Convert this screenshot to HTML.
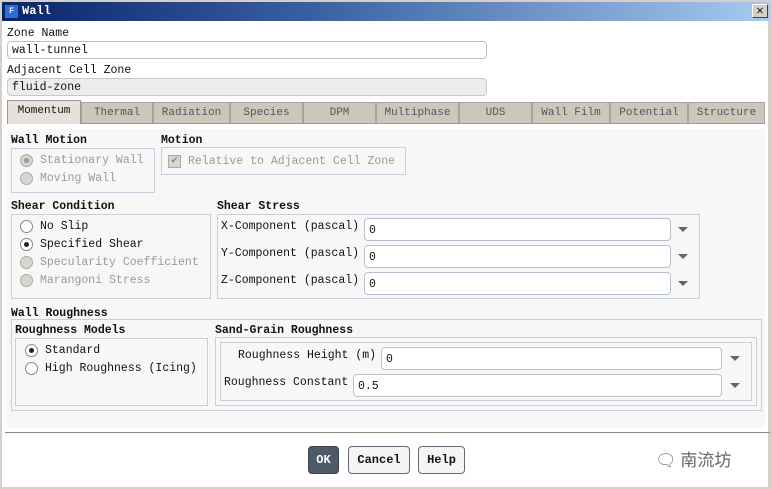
<!DOCTYPE html>
<html><head><style>
*{box-sizing:border-box;margin:0;padding:0}
body{width:772px;height:489px;background:#d4d0c8;font-family:"Liberation Mono","Noto Sans CJK SC",monospace;font-size:11.5px;color:#111;position:relative;overflow:hidden}
.a{position:absolute;white-space:nowrap}
.in{position:absolute;background:#fff;border:1px solid #b9c1cf;border-radius:4px;padding:2px 4px;line-height:14px}
.bx{position:absolute;border:1px solid #c7cfdc}
.b{font-weight:bold}
.tab{position:absolute;top:102px;height:21px;background:#cbc7bd;border:1px solid #a8a49a;border-bottom:none;text-align:center;line-height:20px;color:#555;font-size:11px}
.r{position:absolute;width:13px;height:13px;border-radius:50%;border:1px solid #888;background:#fff}
.r.d{background:#d8d5cf;border-color:#aaa}
.r.s::after{content:"";position:absolute;left:3px;top:3px;width:5px;height:5px;border-radius:50%;background:#222}
.r.d.s::after{background:#999}
.g{color:#999}
.arr{position:absolute;width:0;height:0;border-left:5px solid transparent;border-right:5px solid transparent;border-top:5px solid #666}
.btn{position:absolute;top:446px;height:28px;border:1px solid #667;border-radius:4px;background:#f5f5f5;font-weight:bold;text-align:center;line-height:26px;font-size:12px}
</style></head><body>
<div class="a" style="left:2px;top:2px;width:768px;height:19px;background:linear-gradient(90deg,#0a246a,#3a5fa0 40%,#a6caf0)"></div>
<div class="a" style="left:5px;top:5px;width:13px;height:13px;background:#2b6cd8;color:#fff;font-size:8px;text-align:center;line-height:13px;font-weight:bold">F</div>
<div class="a b" style="left:22px;top:4px;color:#fff;font-size:12px">Wall</div>
<div class="a" style="left:752px;top:4px;width:16px;height:14px;background:#d4d0c8;border:1px solid;border-color:#fff #404040 #404040 #fff;text-align:center;line-height:12px;font-weight:bold;font-size:12px">✕</div>
<div class="a" style="left:2px;top:21px;width:766px;height:466px;background:#fff"></div>
<div class="a" style="left:7px;top:27px">Zone Name</div>
<div class="in" style="left:7px;top:41px;width:480px;height:18px">wall-tunnel</div>
<div class="a" style="left:7px;top:64px">Adjacent Cell Zone</div>
<div class="in" style="left:7px;top:78px;width:480px;height:18px;background:#ececec;border-color:#c8c8c8">fluid-zone</div>
<div class="a" style="left:7px;top:101px;width:758px;height:23px;border-bottom:1px solid #999"></div>
<div class="tab" style="left:7px;width:74px;top:100px;height:24px;background:#e6e2da;color:#111;border-color:#999">Momentum</div>
<div class="tab" style="left:81px;width:72px">Thermal</div>
<div class="tab" style="left:153px;width:77px">Radiation</div>
<div class="tab" style="left:230px;width:73px">Species</div>
<div class="tab" style="left:303px;width:73px">DPM</div>
<div class="tab" style="left:376px;width:83px">Multiphase</div>
<div class="tab" style="left:459px;width:73px">UDS</div>
<div class="tab" style="left:532px;width:78px">Wall Film</div>
<div class="tab" style="left:610px;width:78px">Potential</div>
<div class="tab" style="left:688px;width:77px">Structure</div>
<div class="a" style="left:7px;top:129px;width:758px;height:299px;background:#f7f7f7"></div>

<div class="a b" style="left:11px;top:134px">Wall Motion</div>
<div class="bx" style="left:11px;top:148px;width:144px;height:45px"></div>
<div class="r d s" style="left:20px;top:154px"></div><div class="a g" style="left:40px;top:154px">Stationary Wall</div>
<div class="r d" style="left:20px;top:172px"></div><div class="a g" style="left:40px;top:172px">Moving Wall</div>
<div class="a b" style="left:161px;top:134px">Motion</div>
<div class="bx" style="left:161px;top:147px;width:245px;height:28px"></div>
<div class="a" style="left:168px;top:155px;width:13px;height:13px;background:#d8d5cf;border:1px solid #aaa;color:#888;font-size:11px;line-height:11px;text-align:center">✔</div>
<div class="a g" style="left:188px;top:155px">Relative to Adjacent Cell Zone</div>

<div class="a b" style="left:11px;top:200px">Shear Condition</div>
<div class="bx" style="left:11px;top:214px;width:200px;height:85px"></div>
<div class="r" style="left:20px;top:220px"></div><div class="a" style="left:40px;top:220px">No Slip</div>
<div class="r s" style="left:20px;top:238px"></div><div class="a" style="left:40px;top:238px">Specified Shear</div>
<div class="r d" style="left:20px;top:256px"></div><div class="a g" style="left:40px;top:256px">Specularity Coefficient</div>
<div class="r d" style="left:20px;top:274px"></div><div class="a g" style="left:40px;top:274px">Marangoni Stress</div>
<div class="a b" style="left:217px;top:200px">Shear Stress</div>
<div class="bx" style="left:217px;top:214px;width:483px;height:85px"></div>
<div class="a" style="left:221px;top:220px">X-Component (pascal)</div>
<div class="in" style="left:364px;top:218px;width:307px;height:23px;padding-top:5px">0</div>
<div class="arr" style="left:678px;top:227px"></div>
<div class="a" style="left:221px;top:247px">Y-Component (pascal)</div>
<div class="in" style="left:364px;top:245px;width:307px;height:23px;padding-top:5px">0</div>
<div class="arr" style="left:678px;top:254px"></div>
<div class="a" style="left:221px;top:274px">Z-Component (pascal)</div>
<div class="in" style="left:364px;top:272px;width:307px;height:23px;padding-top:5px">0</div>
<div class="arr" style="left:678px;top:281px"></div>

<div class="a b" style="left:11px;top:307px">Wall Roughness</div>
<div class="bx" style="left:11px;top:319px;width:751px;height:92px"></div>
<div class="a b" style="left:15px;top:324px">Roughness Models</div>
<div class="bx" style="left:15px;top:338px;width:193px;height:68px"></div>
<div class="r s" style="left:25px;top:344px"></div><div class="a" style="left:45px;top:344px">Standard</div>
<div class="r" style="left:25px;top:362px"></div><div class="a" style="left:45px;top:362px">High Roughness (Icing)</div>
<div class="a b" style="left:215px;top:324px">Sand-Grain Roughness</div>
<div class="bx" style="left:215px;top:337px;width:542px;height:69px"></div>
<div class="bx" style="left:220px;top:342px;width:532px;height:59px"></div>
<div class="a" style="left:238px;top:349px">Roughness Height (m)</div>
<div class="in" style="left:381px;top:347px;width:341px;height:23px;padding-top:5px">0</div>
<div class="arr" style="left:730px;top:356px"></div>
<div class="a" style="left:224px;top:376px">Roughness Constant</div>
<div class="in" style="left:353px;top:374px;width:369px;height:23px;padding-top:5px">0.5</div>
<div class="arr" style="left:730px;top:383px"></div>

<div class="a" style="left:5px;top:432px;width:765px;height:1px;background:#888"></div>
<div class="btn" style="left:308px;width:31px;background:#4e5a68;color:#fff;border-color:#3a4450">OK</div>
<div class="btn" style="left:348px;width:62px">Cancel</div>
<div class="btn" style="left:418px;width:47px">Help</div>
<div class="a" style="left:655px;top:446px;font-size:17px;color:#666;font-family:'Noto Sans CJK SC',sans-serif">🗨 南流坊</div>
</body></html>
